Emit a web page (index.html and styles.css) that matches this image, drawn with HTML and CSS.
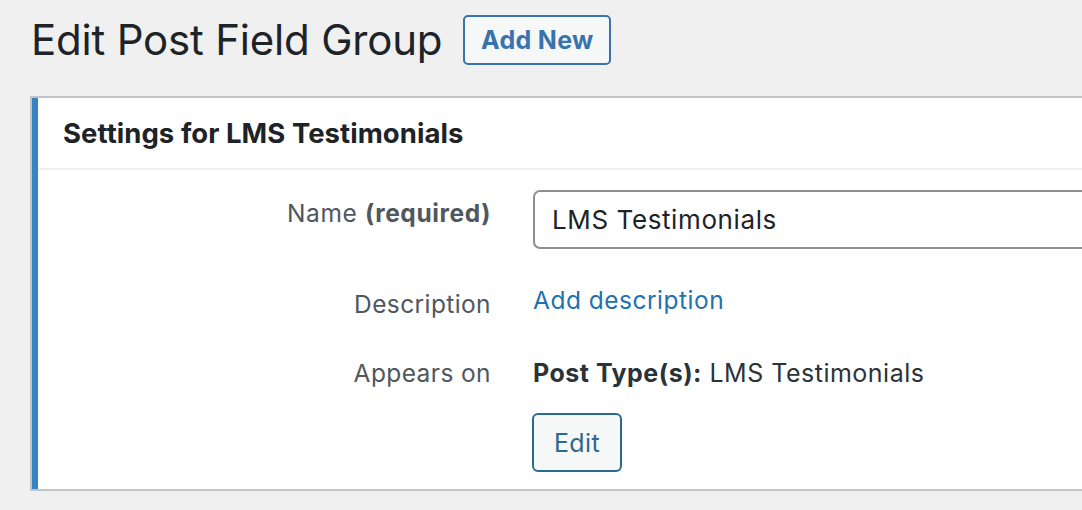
FILE: index.html
```html
<!DOCTYPE html>
<html lang="en">
<head>
<meta charset="utf-8">
<title>Edit Post Field Group</title>
<link rel="stylesheet" href="styles.css">
</head>
<body>
<div class="wrap">
  <div class="page-head">
    <h1 class="page-title">Edit Post Field Group</h1>
    <a class="btn btn-add" href="#">Add New</a>
  </div>

  <div class="postbox">
    <div class="postbox-inner">
      <h2 class="postbox-title">Settings for LMS Testimonials</h2>
      <div class="fields">
        <label class="field-label label-name" for="group-name">Name <strong>(required)</strong></label>
        <div class="field-value">
          <input class="text-input" id="group-name" type="text" value="LMS Testimonials">
        </div>

        <div class="field-label label-desc">Description</div>
        <div class="field-value value-desc"><a class="link" href="#">Add description</a></div>

        <div class="field-label label-appears">Appears on</div>
        <div class="field-value value-appears">
          <div class="appears-text"><strong>Post Type(s):</strong> LMS Testimonials</div>
          <button class="btn btn-edit" type="button">Edit</button>
        </div>
      </div>
    </div>
  </div>
</div>
</body>
</html>
```

FILE: styles.css
```css
html, body {
  margin: 0;
  padding: 0;
  overflow: hidden;
  background: #f0f0f1;
}

body {
  font-family: Inter, "Liberation Sans", Arial, sans-serif;
  color: #1d2327;
}

.wrap {
  padding: 0 0 0 30px;
}

/* page heading row */
.page-head {
  display: flex;
  align-items: center;
  gap: 21px;
  height: 80px;
  padding-left: 1px;
}

.page-title {
  margin: 0;
  font-size: 42px;
  font-weight: 400;
  letter-spacing: -0.2px;
  color: #1d2327;
  line-height: 1;
}

.btn {
  display: inline-flex;
  align-items: center;
  justify-content: center;
  box-sizing: border-box;
  background: #f6f7f7;
  border: 2px solid #3873ae;
  border-radius: 5px;
  text-decoration: none;
  font-family: inherit;
  cursor: pointer;
}

.btn-add {
  width: 148px;
  height: 50px;
  font-size: 25px;
  font-weight: 700;
  color: #3873ae;
  letter-spacing: 0.3px;
}

/* settings box */
.postbox {
  margin-top: 16px;
  margin-right: -40px;
  border: 2px solid #c3c4c7;
  background: #fff;
}

.postbox-inner {
  border-left: 6px solid #3582c4;
}

.postbox-title {
  margin: 0;
  height: 70px;
  display: flex;
  align-items: center;
  padding-left: 25px;
  font-size: 27.5px;
  font-weight: 700;
  color: #1d2327;
  border-bottom: 2px solid #f0f0f1;
  letter-spacing: 0.05px;
}

.fields {
  display: grid;
  grid-template-columns: 453px 1fr;
  column-gap: 42px;
  padding: 20px 0 17px;
  font-size: 24.5px;
  line-height: 30px;
  letter-spacing: 0.4px;
}

.field-label {
  text-align: right;
  color: #50575e;
}

.field-label strong {
  font-weight: 700;
}

.label-name {
  margin-top: 8px;
  letter-spacing: 0.6px;
}

.text-input {
  box-sizing: border-box;
  display: block;
  width: 100%;
  height: 59px;
  padding: 0 17px;
  border: 2px solid #8c8f94;
  border-radius: 7px;
  font-family: inherit;
  font-size: 26px;
  letter-spacing: 0.6px;
  color: #1d2327;
  background: #fff;
  outline: none;
}

.label-desc {
  margin-top: 40px;
}

.value-desc {
  margin-top: 36px;
}

.link {
  color: #2271b1;
  text-decoration: none;
  font-size: 24.5px;
  letter-spacing: 0.5px;
}

.label-appears,
.value-appears {
  margin-top: 39px;
}

.appears-text {
  color: #2c3338;
  font-size: 25px;
  letter-spacing: 0.5px;
}

.appears-text strong {
  font-weight: 700;
}

.btn-edit {
  margin-top: 25px;
  width: 90px;
  height: 59px;
  font-size: 25px;
  font-weight: 400;
  letter-spacing: 0.4px;
  color: #2a6a8e;
  border-color: #2a6a8e;
  border-radius: 6px;
  margin-left: -1px;
}
```
